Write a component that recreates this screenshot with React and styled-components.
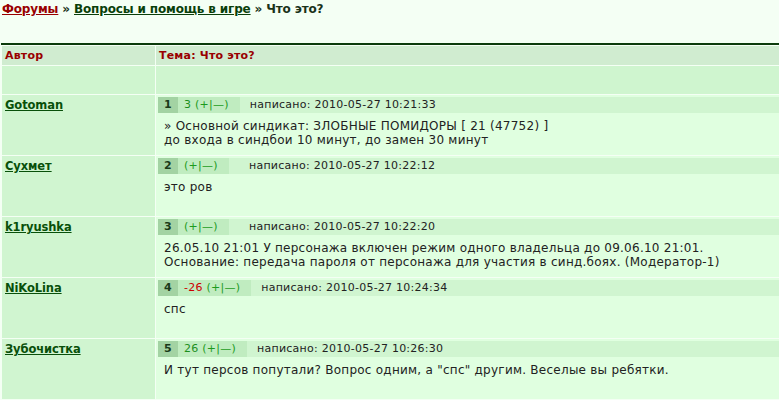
import React from "react";
import styled, { createGlobalStyle } from "styled-components";

const GlobalStyle = createGlobalStyle`
  html, body {
    margin: 0;
    padding: 0;
    background: #f4fff4;
    overflow: hidden;
  }
  body {
    font-family: "DejaVu Sans", Verdana, sans-serif;
    font-size: 11px;
    color: #222;
  }
`;

const Page = styled.div`
  padding: 2px 0 0 1px;
  width: 800px;
`;

const Crumbs = styled.div`
  margin: 0 0 27px 1px;
  font-weight: bold;
  font-size: 12px;
  line-height: 14px;
  letter-spacing: -0.15px;
  color: #1a331a;
`;

const CrumbLink = styled.a`
  color: ${(p) => (p.$home ? "#990000" : "#0a3f0a")};
  text-decoration: underline;
`;

const Table = styled.table`
  width: 790px;
  border-collapse: separate;
  border-spacing: 1px;
  border-top: 2px solid #0b3b0b;
`;

const HeadCell = styled.th`
  height: 19px;
  padding: 0 3px;
  background: #d0ecd0;
  color: #990000;
  font-size: 11px;
  font-weight: bold;
  letter-spacing: 0.2px;
  text-align: left;
  width: ${(p) => p.$w || "auto"};
`;

const BlankCell = styled.td`
  height: 28px;
  padding: 0;
  background: #cff5cf;
`;

const AuthorCell = styled.td`
  width: 147px;
  padding: 3px 3px;
  vertical-align: top;
  background: #d0f5d0;
`;

const Nick = styled.a`
  font-size: 11.5px;
  font-weight: bold;
  letter-spacing: -0.1px;
  color: #08500a;
  text-decoration: underline;
`;

const PostCell = styled.td`
  padding: 2px;
  vertical-align: top;
  background: #e0ffe0;
`;

const Meta = styled.div`
  display: flex;
  align-items: center;
  height: 16px;
  line-height: 16px;
  background: #d0f5d0;
  font-size: 11px;
  letter-spacing: 0.25px;
`;

const Num = styled.span`
  width: 20px;
  align-self: stretch;
  text-align: center;
  background: #a3d3a3;
  color: #1a3a1a;
  font-weight: bold;
`;

const Rating = styled.span`
  align-self: stretch;
  min-width: 34px;
  padding: 0 11px 0 6px;
  background: #c0ecc0;
  color: #1d9a1d;
`;

const Score = styled.span`
  color: ${(p) => (p.$neg ? "#cc0000" : "#1d8f1d")};
`;

const Stamp = styled.span`
  margin-left: ${(p) => (p.$wide ? "20px" : "10px")};
  color: #222;
`;

const Body = styled.div`
  padding: 6px 6px 6px;
  min-height: 28px;
  font-size: 12px;
  line-height: 14px;
  letter-spacing: 0.25px;
  color: #222;
`;

const posts = [
  {
    n: 1,
    author: "Gotoman",
    score: "3",
    date: "2010-05-27 10:21:33",
    lines: [
      "» Основной синдикат: ЗЛОБНЫЕ ПОМИДОРЫ [ 21 (47752) ]",
      "до входа в синдбои 10 минут, до замен 30 минут",
    ],
  },
  { n: 2, author: "Сухмет", score: "", date: "2010-05-27 10:22:12", lines: ["это ров"] },
  {
    n: 3,
    author: "k1ryushka",
    score: "",
    date: "2010-05-27 10:22:20",
    lines: [
      "26.05.10 21:01 У персонажа включен режим одного владельца до 09.06.10 21:01.",
      "Основание: передача пароля от персонажа для участия в синд.боях. (Модератор-1)",
    ],
  },
  { n: 4, author: "NiKoLina", score: "-26", date: "2010-05-27 10:24:34", lines: ["спс"] },
  {
    n: 5,
    author: "Зубочистка",
    score: "26",
    date: "2010-05-27 10:26:30",
    lines: ['И тут персов попутали? Вопрос одним, а "спс" другим. Веселые вы ребятки.'],
  },
];

function Post({ post }) {
  const neg = post.score.startsWith("-");
  return (
    <tr>
      <AuthorCell>
        <Nick href="#">{post.author}</Nick>
      </AuthorCell>
      <PostCell>
        <Meta>
          <Num>{post.n}</Num>
          <Rating>
            {post.score && <Score $neg={neg}>{post.score} </Score>}
            (+|—)
          </Rating>
          <Stamp $wide={!post.score}>написано: {post.date}</Stamp>
        </Meta>
        <Body>
          {post.lines.map((l, i) => (
            <div key={i}>{l}</div>
          ))}
        </Body>
      </PostCell>
    </tr>
  );
}

export default function App() {
  return (
    <>
      <GlobalStyle />
      <Page>
        <Crumbs>
          <CrumbLink $home href="#">Форумы</CrumbLink> » <CrumbLink href="#">Вопросы и помощь в игре</CrumbLink> » Что это?
        </Crumbs>
        <Table>
          <thead>
            <tr>
              <HeadCell $w="147px">Автор</HeadCell>
              <HeadCell>Тема: Что это?</HeadCell>
            </tr>
          </thead>
          <tbody>
            <tr>
              <BlankCell />
              <BlankCell />
            </tr>
            {posts.map((p) => (
              <Post key={p.n} post={p} />
            ))}
          </tbody>
        </Table>
      </Page>
    </>
  );
}
